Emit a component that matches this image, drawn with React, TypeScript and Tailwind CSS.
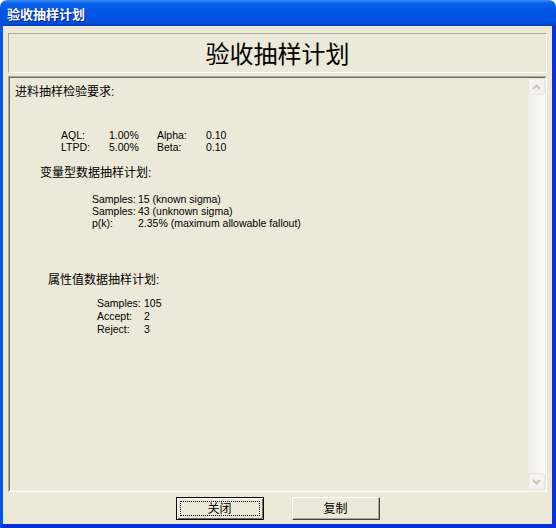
import React from 'react';

const cjk = "font-['Liberation_Sans','Noto_Sans_CJK_SC',sans-serif]";

const Chevron: React.FC<{ down?: boolean }> = ({ down }) => (
  <svg width="9" height="6" viewBox="0 0 9 6" className={down ? '' : 'rotate-180'}>
    <path d="M1 1 L4.5 4.5 L8 1" fill="none" stroke="#c9c7ba" strokeWidth="2" />
  </svg>
);

const ScrollButton: React.FC<{ down?: boolean }> = ({ down }) => (
  <div className="h-[17px] w-[17px] flex items-center justify-center rounded-[2px] border border-[#e8e6dc] bg-[#f4f3ee]">
    <Chevron down={down} />
  </div>
);

const App: React.FC = () => {
  return (
    <div className={`w-[556px] h-[528px] flex flex-col ${cjk} text-black`}>
      {/* title bar */}
      <div className="h-[26px] flex items-center pl-[7px] pt-[3px] rounded-t-[7px] bg-[linear-gradient(to_bottom,#3d8ef7_0%,#0a62ea_12%,#0055e5_45%,#0052e0_80%,#0043c6_100%)]">
        <span className="text-[13px] font-bold text-white [text-shadow:1px_1px_0_#0a1e8c] leading-none">验收抽样计划</span>
      </div>

      {/* body */}
      <div className="flex-1 flex flex-col bg-[#ece9d8] border-l-[3px] border-r-[4px] border-b-[4px] border-l-[#0058ee] border-r-[#0831d9] border-b-[#0831d9] px-[5px] pt-[7px]">
        <div className="h-[40px] flex items-center justify-center border border-t-[#aca899] border-l-[#aca899] border-b-white border-r-white">
          <span className="text-[24px] leading-none font-['Noto_Sans_CJK_SC',sans-serif]">验收抽样计划</span>
        </div>

        <div className="mt-[3px] h-[416px] flex border border-t-[#aca899] border-l-[#aca899] border-b-white border-r-white">
          <div className="flex-1 flex border border-t-[#716f64] border-l-[#716f64] border-b-[#f1efe2] border-r-[#f1efe2]">
            <div className="flex-1 pl-[5px] pt-[7px] text-[10.5px]">
              <div className="text-[12px] leading-[14px]">进料抽样检验要求:</div>

              <div className="mt-[30px] ml-[46px] grid grid-cols-[48px_48px_49px_auto] leading-[12px]">
                <span>AQL:</span><span>1.00%</span><span>Alpha:</span><span>0.10</span>
                <span>LTPD:</span><span>5.00%</span><span>Beta:</span><span>0.10</span>
              </div>

              <div className="mt-[13px] ml-[25px] text-[12px] leading-[14px]">变量型数据抽样计划:</div>

              <div className="mt-[13px] ml-[77px] grid grid-cols-[46px_auto] leading-[12px]">
                <span>Samples:</span><span>15 (known sigma)</span>
                <span>Samples:</span><span>43 (unknown sigma)</span>
                <span>p(k):</span><span>2.35% (maximum allowable fallout)</span>
              </div>

              <div className="mt-[44px] ml-[33px] text-[12px] leading-[14px]">属性值数据抽样计划:</div>

              <div className="mt-[10px] ml-[82px] grid grid-cols-[47px_auto] leading-[13px]">
                <span>Samples:</span><span>105</span>
                <span>Accept:</span><span>2</span>
                <span>Reject:</span><span>3</span>
              </div>
            </div>

            {/* disabled scrollbar */}
            <div className="w-[17px] flex flex-col bg-[linear-gradient(to_right,#eeede5,#fdfdfb)]">
              <ScrollButton />
              <div className="flex-1" />
              <ScrollButton down />
            </div>
          </div>
        </div>

        <div className="pt-[5px] flex justify-center gap-[28px]">
          <button className="w-[88px] h-[23px] border border-black bg-[#ece9d8] shadow-[inset_1px_1px_0_#ffffff,inset_-1px_-1px_0_#716f64] text-[12px] outline-1 outline-dotted outline-black outline-offset-[-5px]">
            关闭
          </button>
          <button className="w-[88px] h-[23px] border border-t-white border-l-white border-b-[#404040] border-r-[#404040] bg-[#ece9d8] shadow-[inset_-1px_-1px_0_#aca899] text-[12px]">
            复制
          </button>
        </div>
      </div>
    </div>
  );
};

export default App;
